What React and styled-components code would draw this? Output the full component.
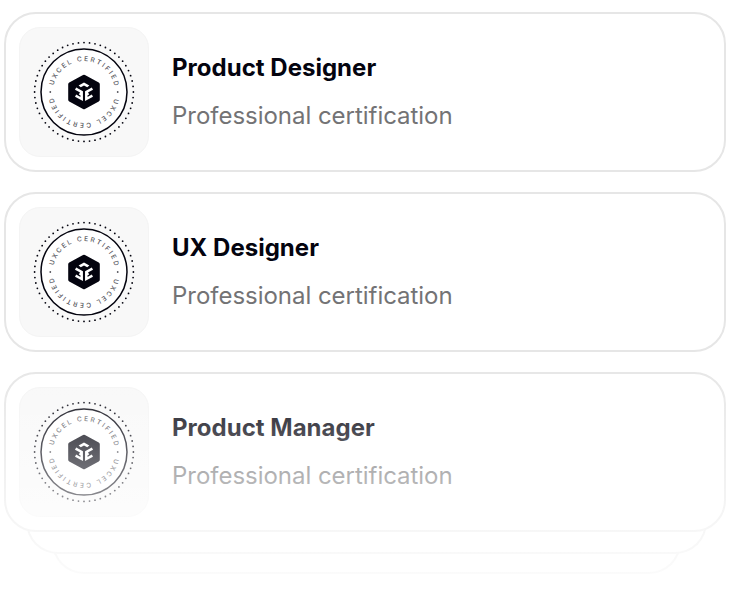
import React from 'react';
import styled, { createGlobalStyle } from 'styled-components';

const GlobalStyle = createGlobalStyle`
	* {
		box-sizing: border-box;
	}
	body {
		margin: 0;
		background-color: #ffffff;
		font-family: Inter, 'Liberation Sans', sans-serif;
	}
`;
const PageContainer = styled.main`
	position: relative;
	width: 730px;
	height: 616px;
	padding: 12px 4px 0;
	overflow: hidden;
`;
const CardList = styled.div`
	position: relative;
	z-index: 2;
	display: flex;
	flex-direction: column;
	gap: 20px;
`;
const Card = styled.article`
	display: flex;
	align-items: center;
	height: 160px;
	padding: 0 13px;
	border: 2px solid #e6e6e6;
	border-radius: 32px;
	background-color: #ffffff;
`;
const BadgeTile = styled.div`
	display: flex;
	align-items: center;
	justify-content: center;
	width: 130px;
	height: 130px;
	border: 1px solid #f4f4f4;
	border-radius: 21px;
	background-color: #f8f8f8;
`;
const CardText = styled.div`
	display: flex;
	flex-direction: column;
	gap: 16px;
	margin-left: 23px;
`;
const Title = styled.h2`
	margin: 0;
	font-size: 24px;
	font-weight: 700;
	line-height: 32px;
	letter-spacing: 0.02px;
	color: #04040f;
`;
const Subtitle = styled.p`
	margin: 0;
	font-size: 24px;
	font-weight: 400;
	line-height: 32px;
	letter-spacing: -0.03px;
	color: #737375;
`;
const StackedCard = styled.div`
	position: relative;
	z-index: ${(props) => props.$level};
	width: ${(props) => props.$width}px;
	height: 64px;
	margin: ${(props) => props.$top}px 0 0 ${(props) => props.$left}px;
	border: 2px solid #e6e6e6;
	border-top: none;
	border-radius: 0 0 32px 32px;
	background-color: #ffffff;
`;
const Fade = styled.div`
	position: absolute;
	z-index: 3;
	left: 0;
	right: 0;
	top: 360px;
	bottom: 0;
	background: linear-gradient(rgba(255, 255, 255, 0) 0, #ffffff 256px);
`;
const SealText = styled.text`
	font-family: Inter, 'Liberation Sans', sans-serif;
	font-size: 6.6px;
	font-weight: 500;
	fill: #55555c;
`;

const DOTS = Array.from({ length: 56 }, (_, i) => (i * 2 * Math.PI) / 56);

const Seal = ({ id }) => (
	<svg width="104" height="104" viewBox="-52 -52 104 104">
		<defs>
			<path id={`${id}-top`} d="M-31 0A31 31 0 0 1 31 0" />
			<path id={`${id}-bottom`} d="M31 0A31 31 0 0 1 -31 0" />
		</defs>
		{DOTS.map((angle) => (
			<circle key={angle} cx={49.4 * Math.cos(angle)} cy={49.4 * Math.sin(angle)} r="0.9" fill="#04040f" />
		))}
		<circle r="43" fill="#ffffff" stroke="#04040f" strokeWidth="1.5" />
		<SealText>
			<textPath href={`#${id}-top`} startOffset="6.6" textLength="84.6" lengthAdjust="spacing">
				UXCEL CERTIFIED
			</textPath>
		</SealText>
		<SealText>
			<textPath href={`#${id}-bottom`} startOffset="6.6" textLength="84.6" lengthAdjust="spacing">
				UXCEL CERTIFIED
			</textPath>
		</SealText>
		<circle cx="-33.7" r="0.9" fill="#55555c" />
		<circle cx="33.7" r="0.9" fill="#55555c" />
		<path
			d="M0 -15.2L13.8 -7.8V7.8L0 15.2L-13.8 7.8V-7.8Z"
			fill="#04040f"
			stroke="#04040f"
			strokeWidth="4"
			strokeLinejoin="round"
		/>
		<path d="M0 -9.6L5.4 -6.6L3.2 -4.8L0 -6.4L-3.2 -4.8L-5.4 -6.6Z" fill="#ffffff" />
		<g fill="none" stroke="#ffffff" strokeWidth="2.5">
			<path d="M-8.4 -3.4L-2.3 0V7L-8.4 3.7M-2.3 2.6L-4.6 1.4" />
			<path d="M8.4 -3.4L2.3 0V7L8.4 3.7M2.3 2.6L4.6 1.4" />
		</g>
	</svg>
);

const certifications = [
	{ id: 'product-designer', title: 'Product Designer' },
	{ id: 'ux-designer', title: 'UX Designer' },
	{ id: 'product-manager', title: 'Product Manager' },
];

const App = () => {
	return (
		<PageContainer>
			<GlobalStyle />
			<CardList>
				{certifications.map((item) => (
					<Card key={item.id}>
						<BadgeTile>
							<Seal id={item.id} />
						</BadgeTile>
						<CardText>
							<Title>{item.title}</Title>
							<Subtitle>Professional certification</Subtitle>
						</CardText>
					</Card>
				))}
			</CardList>
			<StackedCard $level={1} $width={681} $left={22} $top={-42} />
			<StackedCard $level={0} $width={629} $left={48} $top={-44} />
			<Fade />
		</PageContainer>
	);
};

export default App;
